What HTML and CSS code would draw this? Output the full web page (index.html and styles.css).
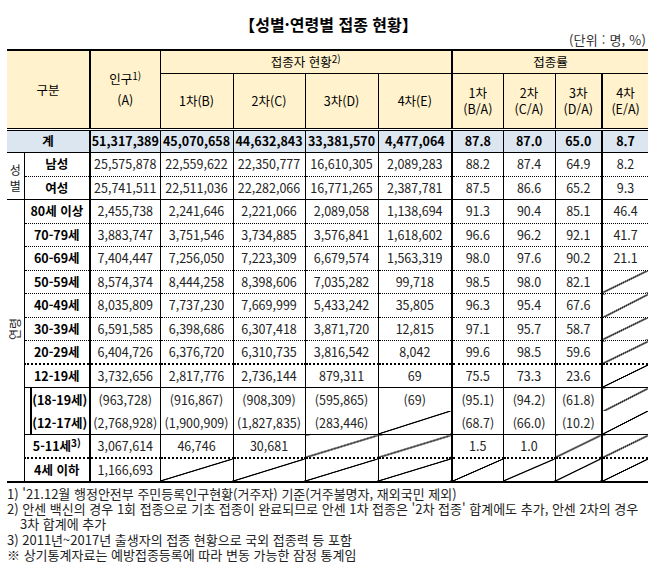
FILE: index.html
```html
<!DOCTYPE html>
<html lang="ko">
<head>
<meta charset="utf-8">
<title>성별·연령별 접종 현황</title>
<link rel="stylesheet" href="styles.css">
</head>
<body>
<div class="page">
  <div class="title">【성별·연령별 접종 현황】</div>
  <div class="unit">(단위 : 명, %)</div>
  <table class="tbl">
    <colgroup>
      <col class="w-lab"><col class="w-cat"><col class="w-pop">
      <col class="w-n1"><col class="w-n2"><col class="w-n3"><col class="w-n4">
      <col class="w-r1"><col class="w-r2"><col class="w-r3"><col class="w-r4">
    </colgroup>
    <thead>
      <tr class="h1">
        <th class="c0" colspan="2" rowspan="2">구분</th>
        <th class="thick pop" rowspan="2">인구<sup>1)</sup><br>(A)</th>
        <th class="grp" colspan="4">접종자 현황<sup>2)</sup></th>
        <th class="thick grp" colspan="4">접종률</th>
      </tr>
      <tr class="h2">
        <th>1차(B)</th><th>2차(C)</th><th>3차(D)</th><th>4차(E)</th>
        <th class="thick two">1차<br>(B/A)</th><th class="two">2차<br>(C/A)</th><th class="two">3차<br>(D/A)</th><th class="thick two">4차<br>(E/A)</th>
      </tr>
    </thead>
    <tbody>
      <tr class="total">
        <td class="c0 lab" colspan="2">계</td>
        <td>51,317,389</td><td>45,070,658</td><td>44,632,843</td><td>33,381,570</td><td>4,477,064</td>
        <td>87.8</td><td>87.0</td><td>65.0</td><td>8.7</td>
      </tr>
      <tr class="dot">
        <td class="c0 side sex" rowspan="2">성<br>별</td>
        <td class="lab">남성</td>
        <td>25,575,878</td><td>22,559,622</td><td>22,350,777</td><td>16,610,305</td><td>2,089,283</td>
        <td>88.2</td><td>87.4</td><td>64.9</td><td>8.2</td>
      </tr>
      <tr class="solid">
        <td class="lab">여성</td>
        <td>25,741,511</td><td>22,511,036</td><td>22,282,066</td><td>16,771,265</td><td>2,387,781</td>
        <td>87.5</td><td>86.6</td><td>65.2</td><td>9.3</td>
      </tr>
      <tr class="dot">
        <td class="c0 side age" rowspan="12"><span class="rot">연령</span></td>
        <td class="lab">80세 이상</td>
        <td>2,455,738</td><td>2,241,646</td><td>2,221,066</td><td>2,089,058</td><td>1,138,694</td>
        <td>91.3</td><td>90.4</td><td>85.1</td><td>46.4</td>
      </tr>
      <tr class="dot">
        <td class="lab">70-79세</td>
        <td>3,883,747</td><td>3,751,546</td><td>3,734,885</td><td>3,576,841</td><td>1,618,602</td>
        <td>96.6</td><td>96.2</td><td>92.1</td><td>41.7</td>
      </tr>
      <tr class="dot">
        <td class="lab">60-69세</td>
        <td>7,404,447</td><td>7,256,050</td><td>7,223,309</td><td>6,679,574</td><td>1,563,319</td>
        <td>98.0</td><td>97.6</td><td>90.2</td><td>21.1</td>
      </tr>
      <tr class="dot">
        <td class="lab">50-59세</td>
        <td>8,574,374</td><td>8,444,258</td><td>8,398,606</td><td>7,035,282</td><td>99,718</td>
        <td>98.5</td><td>98.0</td><td>82.1</td><td class="na"></td>
      </tr>
      <tr class="dot">
        <td class="lab">40-49세</td>
        <td>8,035,809</td><td>7,737,230</td><td>7,669,999</td><td>5,433,242</td><td>35,805</td>
        <td>96.3</td><td>95.4</td><td>67.6</td><td class="na"></td>
      </tr>
      <tr class="dot">
        <td class="lab">30-39세</td>
        <td>6,591,585</td><td>6,398,686</td><td>6,307,418</td><td>3,871,720</td><td>12,815</td>
        <td>97.1</td><td>95.7</td><td>58.7</td><td class="na"></td>
      </tr>
      <tr class="bigdot">
        <td class="lab">20-29세</td>
        <td>6,404,726</td><td>6,376,720</td><td>6,310,735</td><td>3,816,542</td><td>8,042</td>
        <td>99.6</td><td>98.5</td><td>59.6</td><td class="na"></td>
      </tr>
      <tr class="solid">
        <td class="lab">12-19세</td>
        <td>3,732,656</td><td>2,817,776</td><td>2,736,144</td><td>879,311</td><td>69</td>
        <td>75.5</td><td>73.3</td><td>23.6</td><td class="na"></td>
      </tr>
      <tr class="none sub">
        <td class="lab brace">(18-19세)</td>
        <td>(963,728)</td><td>(916,867)</td><td>(908,309)</td><td>(595,865)</td><td>(69)</td>
        <td>(95.1)</td><td>(94.2)</td><td>(61.8)</td><td class="na"></td>
      </tr>
      <tr class="solid sub">
        <td class="lab brace">(12-17세)</td>
        <td>(2,768,928)</td><td>(1,900,909)</td><td>(1,827,835)</td><td>(283,446)</td><td class="na"></td>
        <td>(68.7)</td><td>(66.0)</td><td>(10.2)</td><td class="na"></td>
      </tr>
      <tr class="bigdot">
        <td class="lab">5-11세<sup>3)</sup></td>
        <td>3,067,614</td><td>46,746</td><td>30,681</td><td class="na"></td><td class="na"></td>
        <td>1.5</td><td>1.0</td><td class="na"></td><td class="na"></td>
      </tr>
      <tr class="last">
        <td class="lab">4세 이하</td>
        <td>1,166,693</td><td class="na"></td><td class="na"></td><td class="na"></td><td class="na"></td>
        <td class="na"></td><td class="na"></td><td class="na"></td><td class="na"></td>
      </tr>
    </tbody>
  </table>
  <div class="notes">
    <p class="note">1) '21.12월 행정안전부 주민등록인구현황(거주자) 기준(거주불명자, 재외국민 제외)</p>
    <p class="note hang">2) 안센 백신의 경우 1회 접종으로 기초 접종이 완료되므로 안센 1차 접종은 '2차 접종' 합계에도 추가, 안센 2차의 경우<br>3차 합계에 추가</p>
    <p class="note">3) 2011년~2017년 출생자의 접종 현황으로 국외 접종력 등 포함</p>
    <p class="note">※ 상기통계자료는 예방접종등록에 따라 변동 가능한 잠정 통계임</p>
  </div>
</div>
</body>
</html>
```

FILE: styles.css
```css
html, body {
  margin: 0;
  padding: 0;
  background: #fff;
}

.page {
  width: 655px;
  font-family: "Noto Sans CJK KR", "Noto Sans", sans-serif;
  color: #000;
}

.title {
  margin-top: 14px;
  text-align: center;
  font-size: 16px;
  line-height: 20px;
  font-weight: bold;
  padding-left: 2px;
}

.unit {
  margin-top: -1px;
  text-align: right;
  padding-right: 9px;
  font-size: 13px;
  letter-spacing: 0.2px;
  line-height: 14px;
  color: #333;
}

.tbl {
  margin-top: 2px;
  margin-left: 7px;
  width: 641px;
  table-layout: fixed;
  border-collapse: collapse;
  border-top: 2px solid #000;
  border-bottom: 2px solid #000;
  font-size: 12.5px;
}

.w-lab { width: 17px; }
.w-cat { width: 66px; }
.w-pop { width: 70px; }
.w-n1 { width: 73px; }
.w-n2 { width: 72px; }
.w-n3 { width: 73px; }
.w-n4 { width: 74px; }
.w-r1 { width: 51px; }
.w-r2 { width: 52px; }
.w-r3 { width: 47px; }
.w-r4 { width: 46px; }

.tbl th,
.tbl td {
  padding: 0;
  text-align: center;
  vertical-align: middle;
  border-left: 1px solid #000;
  white-space: nowrap;
  overflow: hidden;
}

.tbl th {
  background: #fff2cc;
  font-weight: normal;
  color: #000;
}

.tbl .c0 { border-left: none; }
.tbl th.thick { border-left: 2px solid #000; }

.tbl sup {
  font-size: 0.8em;
  line-height: 0;
  vertical-align: 0.45em;
}

.h1 { height: 23px; }
.h1 .grp { border-bottom: 1px solid #000; }
.h2 { height: 56px; }
.pop { line-height: 21px; }
.two { line-height: 16px; }

.tbl td {
  color: #222;
  line-height: 16px;
}

.tbl td:nth-last-child(9),
.tbl td:nth-last-child(4),
.tbl td:nth-last-child(1) {
  border-left: 2px solid #000;
}
.tbl td.c0 { border-left: none; }

.tbl tbody tr { height: 23.5px; }

.total { height: 25px; }
.total td {
  background: #dce6f1;
  font-weight: bold;
  color: #000;
  border-top: 3px double #000;
  border-bottom: 1px solid #000;
}

.lab {
  font-weight: bold;
  color: #000 !important;
}

.dot td { border-bottom: 1px dotted #000; }
.bigdot td { border-bottom: 2px dotted #000; }
.solid td { border-bottom: 1px solid #000; }
.none td { border-bottom: none; }

.side {
  font-size: 12px;
  color: #222;
}
.sex {
  line-height: 16px;
  padding-top: 4px !important;
  border-bottom: 1px solid #000 !important;
}
.age {
  padding-bottom: 20px !important;
  border-bottom: 2px solid #000 !important;
}

.rot {
  display: inline-block;
  writing-mode: vertical-rl;
  text-orientation: sideways;
  transform: rotate(180deg);
  line-height: 14px;
}

.sub td.brace {
  padding-left: 6px;
  background: linear-gradient(#000, #000) 5px 0 / 2px 100% no-repeat;
}

.tbl td.na {
  background: linear-gradient(to bottom right,
    transparent calc(50% - 0.9px),
    #000 calc(50% - 0.4px),
    #000 calc(50% + 0.4px),
    transparent calc(50% + 0.9px));
}

.notes {
  margin-top: 3px;
  padding-left: 7px;
  font-size: 13px;
  line-height: 15.4px;
  color: #222;
}

.note {
  margin: 0;
  white-space: nowrap;
}

.hang {
  padding-left: 13px;
  text-indent: -13px;
}
```
